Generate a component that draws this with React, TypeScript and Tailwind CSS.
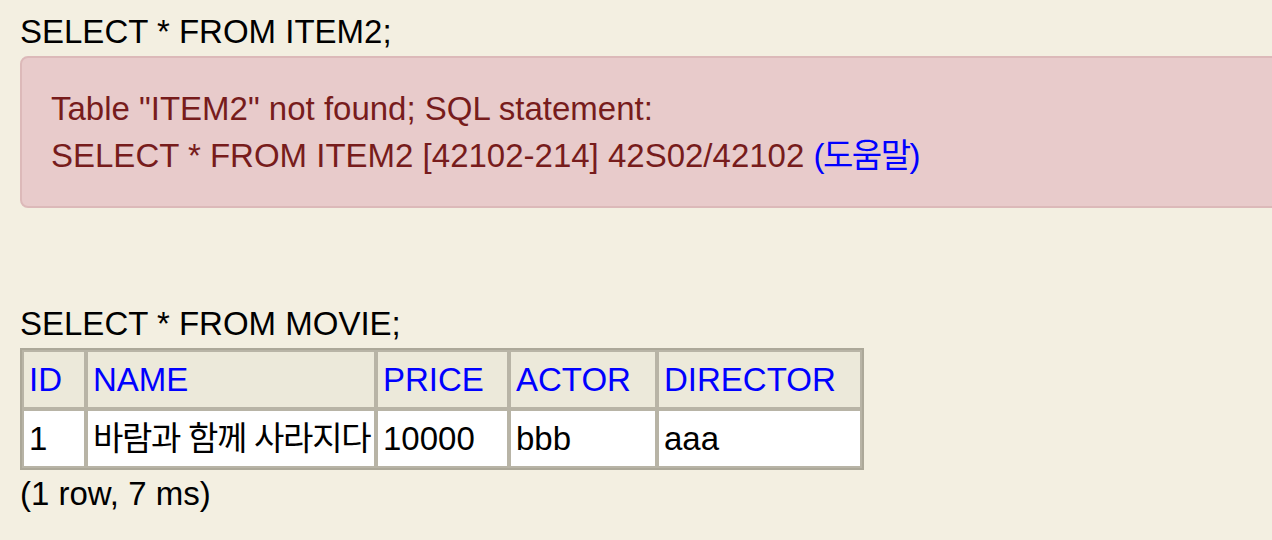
import React from "react";

const font = { fontFamily: '"Liberation Sans", Arial, "Noto Sans CJK KR", sans-serif' };

const cols = [
  { name: "ID", w: "w-[64px]" },
  { name: "NAME", w: "w-[290px]" },
  { name: "PRICE", w: "w-[133px]" },
  { name: "ACTOR", w: "w-[148px]" },
  { name: "DIRECTOR", w: "w-[205px]" },
];

const row = ["1", "바람과 함께 사라지다", "10000", "bbb", "aaa"];

export default function App() {
  return (
    <div
      className="w-full h-[540px] overflow-hidden bg-[#f3efe1] text-black text-[33px] leading-[47px] pt-[8px] pl-5"
      style={font}
    >
      <div className="whitespace-nowrap">SELECT * FROM ITEM2;</div>
      <div className="mt-px w-[1300px] rounded-[8px] border-2 border-[#dcb9b9] bg-[#e8cbcb] text-[#771c1c] pl-[29px] py-[27px]">
        <div className="whitespace-nowrap">Table "ITEM2" not found; SQL statement:</div>
        <div className="whitespace-nowrap">
          SELECT * FROM ITEM2 [42102-214] 42S02/42102{" "}
          <span className="text-[#0000ff] tracking-[-1.5px]">(도움말)</span>
        </div>
      </div>

      <div className="mt-[92px] whitespace-nowrap">SELECT * FROM MOVIE;</div>
      <table className="table-fixed border-separate border-spacing-0 border-2 border-[#aca899] mt-px w-[844px]">
        <thead>
          <tr>
            {cols.map((c) => (
              <th
                key={c.name}
                className={`${c.w} border-2 border-[#b8b4a6] bg-[#ece9da] text-left font-normal text-[#0000ff] pl-[5px] py-[4px] whitespace-nowrap`}
              >
                {c.name}
              </th>
            ))}
          </tr>
        </thead>
        <tbody>
          <tr>
            {row.map((v, i) => (
              <td
                key={i}
                className={`border-2 border-[#b8b4a6] bg-white pl-[5px] py-[4px] whitespace-nowrap ${
                  i === 1 ? "tracking-[-1.3px]" : ""
                }`}
              >
                {v}
              </td>
            ))}
          </tr>
        </tbody>
      </table>
      <div className="whitespace-nowrap">(1 row, 7 ms)</div>
    </div>
  );
}
